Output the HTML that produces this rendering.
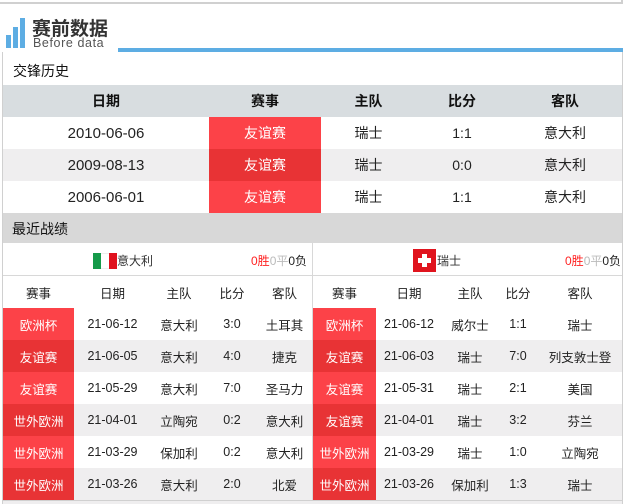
<!DOCTYPE html>
<html><head><meta charset="utf-8"><style>
*{margin:0;padding:0;box-sizing:border-box}
body{width:629px;height:504px;overflow:hidden;background:#fff;font-family:"Liberation Sans","Noto Sans CJK SC",sans-serif;color:#222;position:relative}
.a{position:absolute}
table{border-collapse:collapse;table-layout:fixed;position:absolute}
td{text-align:center;padding:0;white-space:nowrap}
.r1{background:#fc4248;color:#fff}
.r2{background:#e83335;color:#fff}
.g{background:#efeeef}
</style></head><body>
<div class="a" style="left:0;top:0;width:623px;height:4px;border-bottom:2px solid #d0d0d0;border-right:2px solid #d0d0d0"></div>
<div class="a" style="left:6px;top:35px;width:5px;height:13px;background:#5dade3"></div>
<div class="a" style="left:13px;top:27px;width:5px;height:21px;background:#5dade3"></div>
<div class="a" style="left:20px;top:18px;width:5px;height:30px;background:#5dade3"></div>
<div class="a" style="left:32px;top:14px;font-size:19px;font-weight:bold;color:#333;letter-spacing:0px">赛前数据</div>
<div class="a" style="left:33px;top:36px;font-size:12.5px;color:#555;letter-spacing:0.6px">Before data</div>
<div class="a" style="left:118px;top:48px;width:505px;height:4px;background:#5dade3"></div>
<div class="a" style="left:2px;top:52px;width:621px;height:452px;border-left:1px solid #d0d0d0;border-right:1px solid #d0d0d0"></div>
<div class="a" style="left:13px;top:61px;font-size:14px;color:#111">交锋历史</div>
<table style="left:3px;top:85px;width:619px;font-size:14px">
<colgroup><col style="width:206px"><col style="width:112px"><col style="width:95px"><col style="width:92px"><col></colgroup>
<tr style="height:32px;background:#d8dde0;font-weight:bold;color:#111"><td>日期</td><td>赛事</td><td>主队</td><td>比分</td><td>客队</td></tr>
<tr style="height:32px"><td style="font-size:15px">2010-06-06</td><td class="r1">友谊赛</td><td>瑞士</td><td>1:1</td><td>意大利</td></tr>
<tr style="height:32px" class="g"><td style="font-size:15px">2009-08-13</td><td class="r2">友谊赛</td><td>瑞士</td><td>0:0</td><td>意大利</td></tr>
<tr style="height:32px"><td style="font-size:15px">2006-06-01</td><td class="r1">友谊赛</td><td>瑞士</td><td>1:1</td><td>意大利</td></tr>
</table>
<div class="a" style="left:3px;top:213px;width:619px;height:30px;background:#d8d8d8"></div>
<div class="a" style="left:12px;top:219px;font-size:14px;color:#111">最近战绩</div>
<div class="a" style="left:3px;top:275px;width:619px;height:1px;background:#d8d8d8"></div>
<div class="a" style="left:312px;top:243px;width:1px;height:261px;background:#d8d8d8"></div>
<div class="a" style="left:93px;top:253px;width:8px;height:16px;background:#159a4a"></div>
<div class="a" style="left:101px;top:253px;width:8px;height:16px;background:#fff;border-top:1px solid #eee;border-bottom:1px solid #eee"></div>
<div class="a" style="left:109px;top:253px;width:8px;height:16px;background:#e0121e"></div>
<div class="a" style="left:117px;top:252px;font-size:12px;color:#333">意大利</div>
<div class="a" style="left:251px;top:252px;font-size:12px"><span style="color:#f22">0胜</span><span style="color:#bbb">0平</span><span style="color:#222">0负</span></div>
<div class="a" style="left:413px;top:249px;width:23px;height:23px;background:#e0141e"></div>
<div class="a" style="left:422px;top:254px;width:5px;height:13px;background:#fff"></div>
<div class="a" style="left:418px;top:258px;width:13px;height:5px;background:#fff"></div>
<div class="a" style="left:437px;top:252px;font-size:12px;color:#333">瑞士</div>
<div class="a" style="left:565px;top:252px;font-size:12px"><span style="color:#f22">0胜</span><span style="color:#bbb">0平</span><span style="color:#222">0负</span></div>
<table style="left:3px;top:276px;width:309px;font-size:12.5px">
<colgroup><col style="width:71px"><col style="width:77px"><col style="width:56px"><col style="width:50px"><col></colgroup>
<tr style="height:32px"><td>赛事</td><td>日期</td><td>主队</td><td>比分</td><td>客队</td></tr>
<tr style="height:32px"><td class="r1">欧洲杯</td><td>21-06-12</td><td>意大利</td><td>3:0</td><td>土耳其</td></tr>
<tr style="height:32px" class="g"><td class="r2">友谊赛</td><td>21-06-05</td><td>意大利</td><td>4:0</td><td>捷克</td></tr>
<tr style="height:32px"><td class="r1">友谊赛</td><td>21-05-29</td><td>意大利</td><td>7:0</td><td>圣马力</td></tr>
<tr style="height:32px" class="g"><td class="r2">世外欧洲</td><td>21-04-01</td><td>立陶宛</td><td>0:2</td><td>意大利</td></tr>
<tr style="height:32px"><td class="r1">世外欧洲</td><td>21-03-29</td><td>保加利</td><td>0:2</td><td>意大利</td></tr>
<tr style="height:32px" class="g"><td class="r2">世外欧洲</td><td>21-03-26</td><td>意大利</td><td>2:0</td><td>北爱</td></tr>
</table>
<table style="left:313px;top:276px;width:309px;font-size:12.5px">
<colgroup><col style="width:63px"><col style="width:66px"><col style="width:56px"><col style="width:40px"><col></colgroup>
<tr style="height:32px"><td>赛事</td><td>日期</td><td>主队</td><td>比分</td><td>客队</td></tr>
<tr style="height:32px"><td class="r1">欧洲杯</td><td>21-06-12</td><td>威尔士</td><td>1:1</td><td>瑞士</td></tr>
<tr style="height:32px" class="g"><td class="r2">友谊赛</td><td>21-06-03</td><td>瑞士</td><td>7:0</td><td>列支敦士登</td></tr>
<tr style="height:32px"><td class="r1">友谊赛</td><td>21-05-31</td><td>瑞士</td><td>2:1</td><td>美国</td></tr>
<tr style="height:32px" class="g"><td class="r2">友谊赛</td><td>21-04-01</td><td>瑞士</td><td>3:2</td><td>芬兰</td></tr>
<tr style="height:32px"><td class="r1">世外欧洲</td><td>21-03-29</td><td>瑞士</td><td>1:0</td><td>立陶宛</td></tr>
<tr style="height:32px" class="g"><td class="r2">世外欧洲</td><td>21-03-26</td><td>保加利</td><td>1:3</td><td>瑞士</td></tr>
</table>
<div class="a" style="left:3px;top:500px;width:619px;height:1px;background:#d0d0d0"></div>
<div class="a" style="left:3px;top:501px;width:619px;height:3px;background:#efeeef"></div>
</body></html>
